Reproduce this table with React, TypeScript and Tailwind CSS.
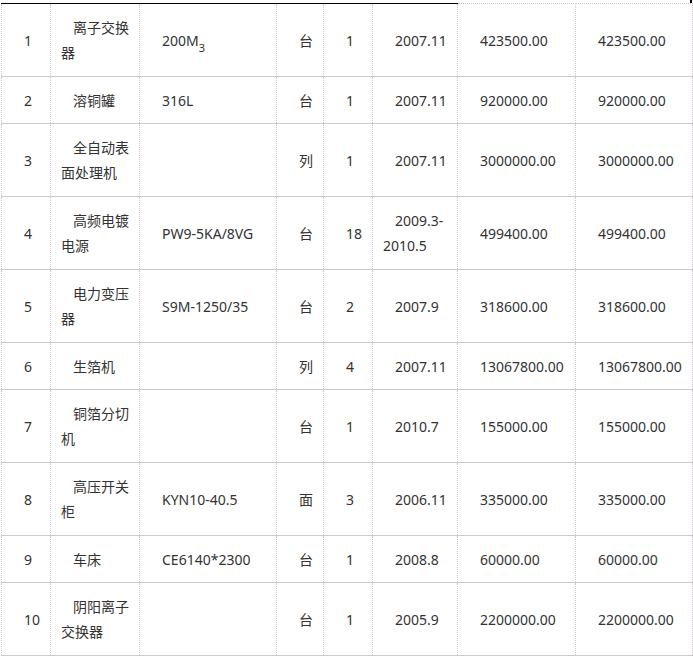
import clsx from "clsx";

type Row = {
  no: string;
  name: string[];
  spec?: React.ReactNode;
  unit: string;
  qty: string;
  date: string[];
  price: string;
  total: string;
  tall?: boolean;
};

const rows: Row[] = [
  {
    no: "1",
    name: ["离子交换", "器"],
    spec: (
      <>
        200M<sub className="text-[11px] align-[-4px]">3</sub>
      </>
    ),
    unit: "台",
    qty: "1",
    date: ["2007.11"],
    price: "423500.00",
    total: "423500.00",
    tall: true,
  },
  { no: "2", name: ["溶铜罐"], spec: "316L", unit: "台", qty: "1", date: ["2007.11"], price: "920000.00", total: "920000.00" },
  { no: "3", name: ["全自动表", "面处理机"], unit: "列", qty: "1", date: ["2007.11"], price: "3000000.00", total: "3000000.00", tall: true },
  { no: "4", name: ["高频电镀", "电源"], spec: "PW9-5KA/8VG", unit: "台", qty: "18", date: ["2009.3-", "2010.5"], price: "499400.00", total: "499400.00", tall: true },
  { no: "5", name: ["电力变压", "器"], spec: "S9M-1250/35", unit: "台", qty: "2", date: ["2007.9"], price: "318600.00", total: "318600.00", tall: true },
  { no: "6", name: ["生箔机"], unit: "列", qty: "4", date: ["2007.11"], price: "13067800.00", total: "13067800.00" },
  { no: "7", name: ["铜箔分切", "机"], unit: "台", qty: "1", date: ["2010.7"], price: "155000.00", total: "155000.00", tall: true },
  { no: "8", name: ["高压开关", "柜"], spec: "KYN10-40.5", unit: "面", qty: "3", date: ["2006.11"], price: "335000.00", total: "335000.00", tall: true },
  { no: "9", name: ["车床"], spec: "CE6140*2300", unit: "台", qty: "1", date: ["2008.8"], price: "60000.00", total: "60000.00" },
  { no: "10", name: ["阴阳离子", "交换器"], unit: "台", qty: "1", date: ["2005.9"], price: "2200000.00", total: "2200000.00", tall: true },
];

const Lines = ({ lines }: { lines: string[] }) => (
  <>
    {lines.map((l, i) => (
      <span key={i}>
        {i > 0 && <br />}
        {l}
      </span>
    ))}
  </>
);

const Cell = ({
  children,
  first,
  blackTop,
}: {
  children?: React.ReactNode;
  first: boolean;
  blackTop: boolean;
}) => (
  <td
    className={clsx(
      "border border-[#cfc7d3] border-dotted pl-[10px] pr-[6px] align-middle indent-[12px] whitespace-nowrap overflow-visible",
      "[border-bottom-style:solid] border-b-[#c6cec6]",
      first
        ? blackTop
          ? "[border-top-style:solid] border-t-black"
          : "[border-top-style:dotted] border-t-[#c9c1cd]"
        : "[border-top-style:solid] border-t-[#c6cec6]"
    )}
  >
    {children}
  </td>
);

export default function App() {
  return (
    <div
      className="w-[693px] h-[657px] bg-white text-[14px] leading-[25px] text-[#333]"
      style={{ fontFamily: '"Noto Sans", "Noto Sans CJK SC", sans-serif' }}
    >
      <div className="flex h-[3px] justify-end">
        <div className="mr-[1px] w-[2px] bg-black" />
      </div>
      <table className="ml-px w-[691px] table-fixed border-collapse">
        <colgroup>
          <col className="w-[49px]" />
          <col className="w-[89px]" />
          <col className="w-[137px]" />
          <col className="w-[47px]" />
          <col className="w-[49px]" />
          <col className="w-[85px]" />
          <col className="w-[118px]" />
          <col className="w-[117px]" />
        </colgroup>
        <tbody>
          {rows.map((r, i) => {
            const first = i === 0;
            return (
              <tr key={r.no} className={r.tall ? "h-[73px]" : "h-[47px]"}>
                <Cell first={first} blackTop>{r.no}</Cell>
                <Cell first={first} blackTop>
                  <Lines lines={r.name} />
                </Cell>
                <Cell first={first} blackTop>{r.spec}</Cell>
                <Cell first={first} blackTop>{r.unit}</Cell>
                <Cell first={first} blackTop>{r.qty}</Cell>
                <Cell first={first} blackTop>
                  <Lines lines={r.date} />
                </Cell>
                <Cell first={first} blackTop={false}>{r.price}</Cell>
                <Cell first={first} blackTop={false}>{r.total}</Cell>
              </tr>
            );
          })}
        </tbody>
      </table>
    </div>
  );
}
